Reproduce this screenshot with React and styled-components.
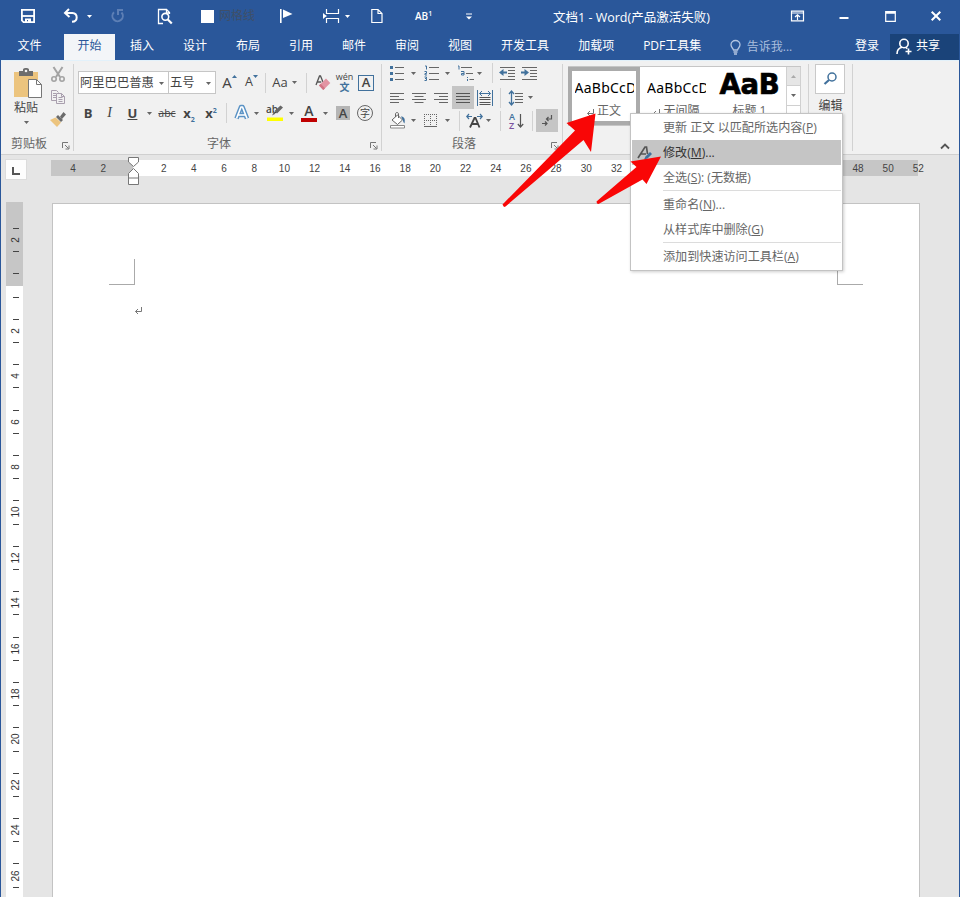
import React from 'react';
import styled, { createGlobalStyle, css } from 'styled-components';

const tabs = ['文件', '开始', '插入', '设计', '布局', '引用', '邮件', '审阅', '视图', '开发工具', '加载项', 'PDF工具集'];
// 34 - 46 sit behind the open menu
const rulerMarks = [4, 2, '', ...Array.from({ length: 26 }, (_, i) => (i + 1) * 2)].map((mark) =>
	mark > 32 && mark < 48 ? '' : mark
);
const sideMarks = [2, '', ...Array.from({ length: 13 }, (_, i) => (i + 1) * 2)];

const menuItems = [
	{ text: '更新 正文 以匹配所选内容', hotkey: 'P' },
	{ text: '修改', hotkey: 'M', tail: '...', active: true },
	{ text: '全选', hotkey: 'S', tail: ': (无数据)', divider: true },
	{ text: '重命名', hotkey: 'N', tail: '...' },
	{ text: '从样式库中删除', hotkey: 'G', divider: true },
	{ text: '添加到快速访问工具栏', hotkey: 'A' },
];

const Icon = ({ w, h, ml = 0, children, ...rest }) => (
	<Svg width={w} height={h} viewBox={`0 0 ${w} ${h}`} $ml={ml} fill='none' {...rest}>
		{children}
	</Svg>
);

const Caret = ({ ml, color = '#666' }) => (
	<Icon w={5} h={3} ml={ml}>
		<path d='M0 0h5L2.5 3z' fill={color} />
	</Icon>
);

const Launcher = () => (
	<Icon w={8} h={8}>
		<path d='M.5 6V.5H6M3 3l3.5 3.5M7 3.5V7H3.5' stroke='#777' />
	</Icon>
);

const TitleBar = () => (
	<Title>
		<Icon w={16} h={16} ml={20} stroke='#fff' strokeWidth='1.8'>
			<path d='M1.9 1.9h12.2v12.2H3.5L1.9 12.5z' />
			<path d='M2 8h12' />
			<path d='M5 10.5h6V14H8v-2H7v2H5z' fill='#fff' stroke='none' />
		</Icon>
		<Icon w={16} h={16} ml={27} stroke='#fff' strokeWidth='2'>
			<path d='M6 1L2 5l4.5 4M2.5 5h6.8c5.8.5 6 8.4-.3 8.8' />
		</Icon>
		<Caret ml={8} color='#fff' />
		<Icon w={15} h={16} ml={18} stroke='#5d7fb5' strokeWidth='2'>
			<path d='M4 4.2a5.2 5.2 0 1 0 7.5.3M8 7V2h5' />
		</Icon>
		<Icon w={16} h={17} ml={32} stroke='#fff' strokeWidth='1.3'>
			<path d='M6 15.5H1.5v-14h8l3 3V6M9.5 1.5V5h3' />
			<circle cx='8.3' cy='8.8' r='3.4' strokeWidth='1.6' />
			<path d='M10.8 11.5l4 4' strokeWidth='2.2' />
		</Icon>
		<CheckBox />
		<Faded>网格线</Faded>
		<Icon w={14} h={16} ml={23} fill='#fff'>
			<path d='M1 1h1.6v14H1zM4 1.5l9.5 4.6L4 10z' />
		</Icon>
		<Icon w={18} h={16} ml={29} stroke='#fff' strokeWidth='1.2'>
			<path d='M4.5 1v4.5h12V1M4.5 15v-4.5h12V15M3 8h1.5' />
			<path d='M1 5v6l3.5-3z' fill='#fff' stroke='none' />
		</Icon>
		<Caret ml={5} color='#fff' />
		<Icon w={12} h={16} ml={21} stroke='#fff' strokeWidth='1.2'>
			<path d='M.8 1.5H7l4 4v9H.8zM7 1.5v4h4' />
		</Icon>
		<Footnote>
			AB<sup>1</sup>
		</Footnote>
		<Icon w={6} h={7} ml={34}>
			<path d='M0 1h6' stroke='#fff' />
			<path d='M0 3.5h6L3 6.5z' fill='#fff' />
		</Icon>
		<DocName>文档1 - Word(产品激活失败)</DocName>
		<Icon w={15} h={12} ml={80} stroke='#fff' strokeWidth='1.2'>
			<path d='M1.5 1.2h12v9.6h-12zM1.5 3h12M7.5 10V5M5 7l2.5-2.3L10 7' />
		</Icon>
		<Icon w={10} h={8} ml={34}>
			<path d='M.5 5h9v2h-9z' fill='#fff' />
		</Icon>
		<Icon w={11} h={11} ml={36} stroke='#fff'>
			<path d='M.7.5h9.6v9.8H.7zM1 2h9' strokeWidth='1.2' />
			<path d='M1 1.5h9' strokeWidth='2' />
		</Icon>
		<Icon w={12} h={12} ml={34} stroke='#fff' strokeWidth='2'>
			<path d='M1.7 1.7l8.6 8.6M10.3 1.7l-8.6 8.6' />
		</Icon>
	</Title>
);

const TabBar = () => (
	<Tabs>
		{tabs.map((tab) => (
			<Tab key={tab} $active={tab === '开始'}>
				{tab}
			</Tab>
		))}
		<TellMe>
			<Icon w={11} h={15} stroke='#b5c6e2' strokeWidth='1.3'>
				<path d='M3.5 10C3 8 1 7.5 1 4.8a4.5 4.3 0 0 1 9 0C10 7.5 8 8 7.5 10zM3.5 12h4M4 14h3' />
			</Icon>
			告诉我...
		</TellMe>
		<SignIn>登录</SignIn>
		<Share>
			<Icon w={16} h={17} stroke='#fff' strokeWidth='1.6'>
				<circle cx='8' cy='5.5' r='4.2' />
				<path d='M1 16c0-4 2-6.2 5-6.8M9.8 9.5l1.5 1.2M12.5 10.5v6M9.5 13.5h6' />
			</Icon>
			共享
		</Share>
	</Tabs>
);

const Clipboard = () => (
	<Group $w={73}>
		<ClipBody>
			<PasteCol>
				<Icon w={30} h={32}>
					<path d='M1 5h24v25H1z' fill='#ecc47e' />
					<path d='M6 4h4V2.5C10 .5 16 .5 16 2.5V4h4v5H6z' fill='#6d6d6d' />
					<circle cx='13' cy='4' r='1.3' fill='#f1f1f1' />
					<path d='M15.5 12.5h8l5 5v13h-13z' fill='#fff' stroke='#777' />
					<path d='M23.5 12.5v5h5' stroke='#777' />
				</Icon>
				<span>粘贴</span>
				<Caret ml={0} />
			</PasteCol>
			<ToolCol>
				<Icon w={16} h={16} stroke='#a3a3a3' strokeWidth='1.6'>
					<path d='M3.5 0l6.5 10M12.5 0L6 10' strokeWidth='2' />
					<circle cx='4' cy='12' r='2.2' />
					<circle cx='12' cy='12' r='2.2' />
				</Icon>
				<Icon w={16} h={16} stroke='#a99fae'>
					<path d='M6 10.5H1.5v-10h5l2 2M3 3.5h3M3 5.5h3M3 7.5h3' />
					<path d='M6.5 3.5h5l3 3v7h-8zM11.5 3.5v3h3M8.5 7.5h4M8.5 9.5h4M8.5 11.5h4' fill='#f1f1f1' />
				</Icon>
				<Icon w={16} h={16}>
					<path d='M0 8l5.5-2.5L11 10.5l-4 4.5z' fill='#ecc47e' />
					<path d='M6 5l2-2 5 5-2 2zM10 4.5L13.5 0 16 2.5l-4 4.5z' fill='#6b6b6b' />
				</Icon>
			</ToolCol>
		</ClipBody>
		<GroupLabel $pad={10}>
			剪贴板
			<Launcher />
		</GroupLabel>
	</Group>
);

const FontGroup = () => (
	<Group $w={308}>
		<Rows $top={7} $gap={8}>
			<Row $h={23}>
				<Combo $w={91} $ml={4}>
					<span>阿里巴巴普惠</span>
					<Caret />
				</Combo>
				<Combo $w={48} $ml={-1}>
					<span>五号</span>
					<Caret />
				</Combo>
				<Letter $w={10} $ml={6} $size={15}>A</Letter>
				<Icon w={5} h={16}>
					<path d='M0 3l2.5-3L5 3z' fill='#41719c' />
				</Icon>
				<Letter $w={8} $ml={8} $size={12.5}>A</Letter>
				<Icon w={5} h={16}>
					<path d='M0 0h5L2.5 3z' fill='#41719c' />
				</Icon>
				<Line $ml={7} />
				<Letter $w={16} $ml={6} $size={13}>Aa</Letter>
				<Caret ml={4} />
				<Line $ml={9} />
				<Icon w={16} h={18} ml={8}>
					<path d='M1 11L4.5 2h1L8 8M2.3 8h4' stroke='#555' strokeWidth='1.3' />
					<path d='M4 11.5l7-7 4.3 4.5-7 7z' fill='#e294a3' />
					<path d='M4 11.5l1.7-1.7 4.3 4.5-1.7 1.7z' fill='#d27384' />
				</Icon>
				<Pinyin>
					<span>wén</span>
					<b>文</b>
				</Pinyin>
				<BoxedA>A</BoxedA>
			</Row>
			<Row $h={22}>
				<Letter $w={10} $ml={9} $size={13} $bold>B</Letter>
				<Letter $w={9} $ml={12} $size={14} $italic>I</Letter>
				<Letter $w={11} $ml={13} $size={13} $bold $line='underline'>U</Letter>
				<Caret ml={9} />
				<Letter $w={18} $ml={6} $size={10.5} $line='line-through'>abc</Letter>
				<Letter $w={14} $ml={6} $size={13} $bold>
					x<sub>2</sub>
				</Letter>
				<Letter $w={14} $ml={8} $size={13} $bold>
					x<sup>2</sup>
				</Letter>
				<Line $ml={8} />
				<Icon w={16} h={18} ml={7} strokeLinejoin='round'>
					<path d='M2.5 14.5L7 3h1.5L13 14.5M4.5 11h6.5' stroke='#5b93c5' strokeWidth='4.6' />
					<path d='M2.5 14.5L7 3h1.5L13 14.5M4.5 11h6.5' stroke='#fff' strokeWidth='1.7' />
				</Icon>
				<Caret ml={4} />
				<Marker>
					<span>ab</span>
					<Icon w={19} h={18}>
						<path d='M6 11.5l2-4 1.5 2.2zM8.5 7l6-5.5L17 3.5l-6 6z' fill='#666' />
						<path d='M1 13.5h16v3.5H1z' fill='#ff0' />
					</Icon>
				</Marker>
				<Caret ml={4} />
				<ColorA>A</ColorA>
				<Caret ml={5} />
				<ShadedA>A</ShadedA>
				<CircledChar>字</CircledChar>
			</Row>
		</Rows>
		<GroupLabel $pad={133}>
			字体
			<Launcher />
		</GroupLabel>
	</Group>
);

const ParagraphGroup = () => (
	<Group $w={181}>
		<Rows $top={0} $gap={0}>
			<Row $h={18} $mb={4}>
				<Icon w={14} h={16} ml={8}>
					<path d='M0 1h3v3H0zM0 7h3v3H0zM0 13h3v3H0z' fill='#41719c' />
					<path d='M5 2.5h9M5 8.5h9M5 14.5h9' stroke='#666' />
				</Icon>
				<Caret ml={7} />
				<Icon w={15} h={16} ml={8}>
					<path d='M1 1h1.5v3.5M.5 6.5h2v2H1v1.5h2M.5 12h2v1.5H1M2.5 13.5v2h-2' stroke='#41719c' />
					<path d='M5 2.5h10M5 8.5h10M5 14.5h10' stroke='#666' />
				</Icon>
				<Caret ml={6} />
				<Icon w={17} h={16} ml={7}>
					<path d='M1 1h1v3.5M4 6.5h3V10H4.5V8.5H7M10.5 14v2M10.5 12v1' stroke='#41719c' />
					<path d='M4 2.5h11M9 8.5h7M12.5 14.5H17' stroke='#666' />
				</Icon>
				<Caret ml={3} />
				<Line $ml={10} />
				<Icon w={17} h={14} ml={6}>
					<path d='M1 1.5h15M9 4.5h7M9 7.5h7M9 10.5h7M1 13.5h15' stroke='#666' />
					<path d='M0 6.5L4.5 3v2.5H8v2H4.5V10z' fill='#41719c' />
				</Icon>
				<Icon w={17} h={14} ml={5}>
					<path d='M1 1.5h15M9 4.5h7M9 7.5h7M9 10.5h7M1 13.5h15' stroke='#666' />
					<path d='M8 6.5L3.5 3v2.5H0v2h3.5V10z' fill='#41719c' />
				</Icon>
			</Row>
			<Row $h={23}>
				<Icon w={14} h={12} ml={8} stroke='#666'>
					<path d='M0 1.5h14M0 4.5h9M0 7.5h14M0 10.5h9' />
				</Icon>
				<Icon w={14} h={12} ml={8} stroke='#666'>
					<path d='M0 1.5h14M2.5 4.5h9M0 7.5h14M2.5 10.5h9' />
				</Icon>
				<Icon w={14} h={12} ml={8} stroke='#666'>
					<path d='M0 1.5h14M5 4.5h9M0 7.5h14M5 10.5h9' />
				</Icon>
				<Pressed $ml={4}>
					<Icon w={14} h={12} stroke='#555'>
						<path d='M0 1.5h14M0 4.5h14M0 7.5h14M0 10.5h14' />
					</Icon>
				</Pressed>
				<Icon w={17} h={16} ml={3}>
					<path d='M.5 0v16M15.5 0v16M2.5 3.5h11M5 1L2.5 3.5 5 6M11 1l2.5 2.5L11 6' stroke='#41719c' />
					<path d='M2.5 7.5h11M2.5 9.5h11M2.5 12.5h11M2.5 14.5h11' stroke='#555' />
				</Icon>
				<Line $ml={6} />
				<Icon w={16} h={16} ml={7}>
					<path d='M3.5 1v14M1 4l2.5-3L6 4M1 12l2.5 3L6 12' stroke='#41719c' strokeWidth='1.3' />
					<path d='M7 3.5h8M7 6.5h8M7 9.5h8M7 12.5h8' stroke='#666' />
				</Icon>
				<Caret ml={4} />
			</Row>
			<Row $h={23}>
				<Icon w={17} h={17} ml={7}>
					<path d='M3 8l5.5-5 5 5L8.5 12.5z' fill='#fff' stroke='#666' />
					<path d='M6.5 5V2c0-2 3-2 3 0V6' stroke='#666' />
					<path d='M12 4.5c3 0 4.5 2 3.5 7-1.5-1.5-1.5-3-2-4z' fill='#41719c' />
					<path d='M1.5 13.5h14v2.5h-14z' fill='#fff' stroke='#888' />
				</Icon>
				<Caret ml={5} />
				<Icon w={14} h={14} ml={8} stroke='#666' strokeDasharray='1 1'>
					<path d='M.5 0v12M6.5 0v12M12.5 0v12M0 .5h13M0 6.5h13' />
					<path d='M0 12.5h13' strokeDasharray='none' />
				</Icon>
				<Caret ml={7} />
				<Line $ml={9} />
				<Icon w={18} h={16} ml={6}>
					<path d='M4 14.5L8.5 5h1l4 9.5M6 11h6' stroke='#444' strokeWidth='1.8' />
					<path d='M1 3.5h5M3 1L.8 3.5 3 6M11 3.5h5M14 1l2.2 2.5L14 6' stroke='#41719c' strokeWidth='1.2' />
				</Icon>
				<Caret ml={2} />
				<Line $ml={9} />
				<SortIcon>
					<SortLetters>
						<span>A</span>
						<span>Z</span>
					</SortLetters>
					<Icon w={7} h={16}>
						<path d='M3.5 1v13M.8 11l2.7 3 2.7-3' stroke='#555' strokeWidth='1.2' />
					</Icon>
				</SortIcon>
				<Line $ml={8} />
				<Pressed $ml={3}>
					<Icon w={12} h={13} stroke='#555' strokeWidth='1.2'>
						<path d='M10.5 1v4H5.5M7.5 3L5.5 5l2 2M1 9.5h5M4 7.5l2 2-2 2' />
					</Icon>
				</Pressed>
			</Row>
		</Rows>
		<GroupLabel $pad={70}>
			段落
			<Launcher />
		</GroupLabel>
	</Group>
);

const ReturnMark = () => (
	<Icon w={7} h={8} stroke='#777'>
		<path d='M6.5 0v4.5h-6M3 2L.5 4.5 3 7' />
	</Icon>
);

const StylesGroup = () => (
	<Group $w={246}>
		<Gallery>
			<StyleCard $w={72} $selected>
				<Sample>AaBbCcD</Sample>
				<StyleName>
					<ReturnMark />
					正文
				</StyleName>
			</StyleCard>
			<StyleCard $w={73}>
				<Sample>AaBbCcD</Sample>
				<StyleName>
					<ReturnMark />
					无间隔
				</StyleName>
			</StyleCard>
			<StyleCard $w={73}>
				<Sample $heading>AaB</Sample>
				<StyleName>标题 1</StyleName>
			</StyleCard>
			<Scroller>
				<ScrollBtn $dim>
					<Icon w={5} h={3}>
						<path d='M0 3h5L2.5 0z' fill='#aaa' />
					</Icon>
				</ScrollBtn>
				<ScrollBtn>
					<Caret />
				</ScrollBtn>
				<ScrollBtn />
			</Scroller>
		</Gallery>
	</Group>
);

const EditGroup = () => (
	<Group $w={44}>
		<EditCol>
			<EditBtn>
				<Icon w={16} h={16} stroke='#41719c'>
					<circle cx='10' cy='6' r='4' strokeWidth='1.5' />
					<path d='M7 9l-4.5 4' strokeWidth='2.2' />
				</Icon>
			</EditBtn>
			编辑
		</EditCol>
	</Group>
);

const ContextMenu = () => (
	<Menu>
		{menuItems.map(({ text, hotkey, tail, active, divider }) => (
			<React.Fragment key={hotkey}>
				<MenuItem $active={active}>
					<MenuIcon>
						{active && (
							<Icon w={16} h={16}>
								<path d='M1 12L8 1h1.5L10.5 8M4 8h5' stroke='#555' strokeWidth='1.7' />
								<path d='M7 13.5l1.5-3L13 6l2 2-4.5 4.5z' fill='#41719c' />
							</Icon>
						)}
					</MenuIcon>
					<span>
						{text}(<u>{hotkey}</u>){tail}
					</span>
				</MenuItem>
				{divider && <Divider />}
			</React.Fragment>
		))}
	</Menu>
);

const App = () => (
	<>
		<GlobalStyle />
		<Window>
			<TitleBar />
			<TabBar />
			<Frame>
				<Ribbon>
					<Clipboard />
					<FontGroup />
					<ParagraphGroup />
					<StylesGroup />
					<EditGroup />
					<Collapse>
						<Icon w={10} h={7} stroke='#555' strokeWidth='1.8'>
							<path d='M1 5.5l4-4 4 4' />
						</Icon>
					</Collapse>
				</Ribbon>
				<RulerRow>
					<TabStop>
						<Icon w={8} h={8} stroke='#555' strokeWidth='2'>
							<path d='M1 0v7h7' />
						</Icon>
					</TabStop>
					<Ruler>
						{rulerMarks.map((mark, i) => (
							<RulerMark key={i}>{mark}</RulerMark>
						))}
						<Indent>
							<Icon w={12} h={29} stroke='#777'>
								<path d='M.5.5h10V5L5.5 9.5.5 5z' fill='#fff' />
								<path d='M5.5 11.5l5 5v11H.5v-11zM.5 21h10' fill='#fff' />
							</Icon>
						</Indent>
					</Ruler>
				</RulerRow>
				<Work>
					<SideRuler>
						{sideMarks.map((mark, i) => (
							<SideMark key={i}>
								<span>{mark}</span>
							</SideMark>
						))}
					</SideRuler>
					<Page>
						<PageTop>
							<Corner $side='right' />
							<Corner $side='left' />
						</PageTop>
						<Paragraph>
							<ReturnMark />
						</Paragraph>
					</Page>
				</Work>
			</Frame>
			<ContextMenu />
			<Arrows width='170' height='110' viewBox='495 105 170 110'>
				<path d='M595.5 113.5L566.5 123l8.5 7.5L502.5 204.5l1.5 2.5 1.5-.5L583.5 140l7.5 12z' />
				<path d='M661 156.5l-30.5 5 6 5.5-40 34.5.5 2 1.5.5 44-24.5 4 4.5z' />
			</Arrows>
		</Window>
	</>
);

export default App;

const GlobalStyle = createGlobalStyle`
	* {
		box-sizing: border-box;
	}

	body {
		margin: 0;
		font-family: 'Open Sans', 'Noto Sans CJK SC', sans-serif;
		font-size: 12px;
		line-height: 1;
		color: #444;
		overflow: hidden;
	}
`;

const Svg = styled.svg`
	display: block;
	flex: none;
	overflow: visible;
	margin-left: ${({ $ml }) => $ml}px;
`;

const Window = styled.div`
	position: relative;
	width: 960px;
	height: 897px;
	display: flex;
	flex-direction: column;
	overflow: hidden;
	white-space: nowrap;
`;

const Title = styled.div`
	height: 34px;
	padding-bottom: 2px;
	background-color: #2a579a;
	color: #fff;
	display: flex;
	align-items: center;
`;

const CheckBox = styled.div`
	width: 13px;
	height: 13px;
	margin-left: 28px;
	background-color: #fff;
`;

const Faded = styled.span`
	width: 38px;
	margin-left: 4px;
	padding-left: 1px;
	color: #3f4f68;
`;

const Footnote = styled.span`
	width: 17px;
	margin-left: 32px;
	font-size: 10px;
	font-weight: 600;

	sup {
		font-size: 7px;
		line-height: 0;
	}
`;

const DocName = styled.span`
	width: 157px;
	margin-left: 81px;
	padding-top: 4px;
	font-size: 12.5px;
`;

const Tabs = styled.div`
	height: 26px;
	padding-left: 3px;
	background-color: #2a579a;
	color: #fff;
	display: flex;
	align-items: stretch;
`;

const Tab = styled.div`
	padding: 0 14.5px 2px;
	display: flex;
	align-items: center;

	&:first-child {
		width: 53px;
	}

	${({ $active }) =>
		$active &&
		css`
			width: 51px;
			margin: 0 0.5px 0 8px;
			padding: 0 0 2px;
			justify-content: center;
			color: #2a579a;
			background-color: #f3f5f8;
		`}
`;

const TellMe = styled.div`
	width: 114px;
	margin-left: 14px;
	color: #a9bddd;
	display: flex;
	align-items: center;
	gap: 6px;
`;

const SignIn = styled.div`
	margin-left: auto;
	padding-bottom: 2px;
	display: flex;
	align-items: center;
`;

const Share = styled.div`
	width: 69px;
	margin: 0 1px 0 11px;
	padding: 0 0 3px 6px;
	background-color: #1a4379;
	display: flex;
	align-items: center;
	gap: 4px;

	svg {
		margin-top: 2px;
	}
`;

const Frame = styled.div`
	flex: 1;
	min-height: 0;
	border: solid #2a579a;
	border-width: 0 1px;
	background-color: #e5e5e5;
	display: flex;
	flex-direction: column;
`;

const Ribbon = styled.div`
	height: 95px;
	padding-top: 3px;
	border-top: 1px solid #e2f1fa;
	border-bottom: 1px solid #d0d0d0;
	background-color: #f1f1f1;
	display: flex;
`;

const Group = styled.div`
	width: ${({ $w }) => $w}px;
	height: 87px;
	border-right: 1px solid #d2d2d2;
	display: flex;
	flex-direction: column;
	flex: none;
`;

const GroupLabel = styled.div`
	height: 17px;
	margin-top: auto;
	padding: 2px 3px 0 ${({ $pad }) => $pad}px;
	color: #666;
	display: flex;
	align-items: center;
	justify-content: space-between;

	svg {
		margin-top: 5px;
	}
`;

const ClipBody = styled.div`
	display: flex;
	padding: 3px 0 0 12px;
	gap: 7px;
`;

const PasteCol = styled.div`
	width: 30px;
	display: flex;
	flex-direction: column;
	align-items: center;

	> span {
		margin: 3px 4px 7px 0;
	}

	> svg:last-child {
		margin-right: 3px;
	}
`;

const ToolCol = styled.div`
	display: flex;
	flex-direction: column;
	gap: 6.5px;
`;

const Rows = styled.div`
	padding-top: ${({ $top }) => $top}px;
	display: flex;
	flex-direction: column;
	gap: ${({ $gap }) => $gap}px;
`;

const Row = styled.div`
	height: ${({ $h }) => $h}px;
	margin-bottom: ${({ $mb = 0 }) => $mb}px;
	display: flex;
	align-items: center;
`;

const Line = styled.div`
	width: 1px;
	height: 20px;
	margin-left: ${({ $ml }) => $ml}px;
	background-color: #d2d2d2;
`;

const Combo = styled.div`
	width: ${({ $w }) => $w}px;
	height: 23px;
	margin-left: ${({ $ml }) => $ml}px;
	padding: 1px 4px 0 1px;
	border: 1px solid #c6c6c6;
	background-color: #fff;
	font-size: 12.3px;
	display: flex;
	align-items: center;
	justify-content: space-between;
	flex: none;
`;

const Letter = styled.span`
	width: ${({ $w }) => $w}px;
	margin-left: ${({ $ml }) => $ml}px;
	font-size: ${({ $size }) => $size}px;
	font-weight: ${({ $bold }) => ($bold ? 700 : 400)};
	font-style: ${({ $italic }) => ($italic ? 'italic' : 'normal')};
	font-family: ${({ $italic }) => ($italic ? "'Liberation Serif', serif" : 'inherit')};
	text-decoration: ${({ $line }) => $line || 'none'};
	text-align: center;
	flex: none;

	sub,
	sup {
		font-size: 7px;
		line-height: 0;
		color: #41719c;
	}
`;

const Pinyin = styled.span`
	width: 17px;
	margin-left: 5px;
	padding-bottom: 2px;
	font-size: 9px;
	display: flex;
	flex-direction: column;
	align-items: center;
	gap: 1px;

	b {
		font-size: 10px;
		color: #41719c;
	}
`;

const BoxedA = styled.span`
	width: 16px;
	height: 16px;
	margin-left: 5px;
	border: 1.5px solid #41719c;
	font-size: 13px;
	font-weight: 600;
	display: flex;
	align-items: center;
	justify-content: center;
`;

const Marker = styled.span`
	width: 19px;
	margin-left: 7px;
	display: grid;

	> * {
		grid-area: 1 / 1;
	}

	> span {
		font-size: 10px;
		font-weight: 600;
	}
`;

const ColorA = styled.span`
	width: 16px;
	height: 17px;
	margin: 0 1px 0 7px;
	border-bottom: 4px solid #c00000;
	font-size: 14px;
	font-weight: 600;
	line-height: 12px;
	text-align: center;
`;

const ShadedA = styled.span`
	width: 14px;
	height: 14px;
	margin-left: 8px;
	background-color: #b5b5b5;
	font-size: 13px;
	font-weight: 600;
	line-height: 14px;
	text-align: center;
`;

const CircledChar = styled.span`
	width: 16px;
	height: 16px;
	margin-left: 7px;
	border: 1px solid #666;
	border-radius: 50%;
	font-size: 10px;
	display: flex;
	align-items: center;
	justify-content: center;
`;

const Pressed = styled.div`
	width: 22px;
	height: 23px;
	margin-left: ${({ $ml }) => $ml}px;
	background-color: #c5c5c5;
	display: flex;
	align-items: center;
	justify-content: center;
`;

const SortIcon = styled.span`
	width: 15px;
	margin-left: 8px;
	display: flex;
	align-items: center;
	gap: 1px;
`;

const SortLetters = styled.span`
	width: 7px;
	font-size: 9px;
	font-weight: 600;
	line-height: 9px;
	color: #41719c;
	display: flex;
	flex-direction: column;

	span:last-child {
		color: #7a52a0;
	}
`;

const Gallery = styled.div`
	width: 233px;
	height: 60px;
	margin: 2px 0 0 5px;
	border: solid #c6c6c6;
	border-width: 1px 0;
	background-color: #fff;
	display: flex;
`;

const StyleCard = styled.div`
	width: ${({ $w }) => $w}px;
	padding: ${({ $selected }) => ($selected ? '2px 0' : '6px 0 0')};
	border: ${({ $selected }) => ($selected ? '4px solid #ababab' : 'none')};
	display: flex;
	flex-direction: column;
	align-items: center;
	flex: none;
`;

const Sample = styled.div`
	width: 59px;
	height: 30px;
	overflow: hidden;
	font-family: 'Noto Sans', sans-serif;
	font-size: 14px;
	line-height: 29px;
	letter-spacing: 0.25px;
	color: #000;

	${({ $heading }) =>
		$heading &&
		css`
			width: auto;
			overflow: visible;
			font-family: 'DejaVu Sans', sans-serif;
			font-size: 27.5px;
			font-weight: 700;
			line-height: 23px;
			letter-spacing: -0.3px;
			-webkit-text-stroke: 0.7px #000;
		`}
`;

const StyleName = styled.div`
	height: 14px;
	margin-top: 1px;
	color: #666;
	display: flex;
	align-items: center;
	gap: 3px;

	svg {
		margin-top: 4px;
	}
`;

const Scroller = styled.div`
	width: 15px;
	border: solid #d0d0d0;
	border-width: 0 1px;
	display: flex;
	flex-direction: column;
`;

const ScrollBtn = styled.div`
	flex: 1;
	border-bottom: 1px solid #d0d0d0;
	background-color: ${({ $dim }) => ($dim ? '#e6e6e6' : '#fff')};
	display: flex;
	align-items: center;
	justify-content: center;
`;

const EditCol = styled.div`
	width: 37px;
	padding-left: 6px;
	display: flex;
	flex-direction: column;
	align-items: center;
	gap: 6px;
`;

const EditBtn = styled.div`
	width: 30px;
	height: 30px;
	margin-left: -1px;
	border: 1px solid #c9c9c9;
	background-color: #fff;
	display: flex;
	align-items: center;
	justify-content: center;
`;

const Collapse = styled.div`
	margin: auto 9px 4px auto;
`;

const RulerRow = styled.div`
	height: 47px;
	padding: 4px 0 0 4px;
	display: flex;
	align-items: flex-start;
	flex: none;
`;

const TabStop = styled.div`
	width: 22px;
	height: 21px;
	border: 1px solid #dcdcdc;
	background-color: #fdfdfd;
	padding: 3px 0 0 0;
	display: flex;
	align-items: center;
	justify-content: center;
`;

const Ruler = styled.div`
	position: relative;
	width: 867px;
	height: 16px;
	margin: 1px 0 0 24px;
	padding-left: 7px;
	background: linear-gradient(90deg, #c6c6c6 82px, #fff 82px, #fff 786px, #c6c6c6 786px);
	display: flex;
	align-items: center;
`;

const RulerMark = styled.span`
	width: 30.2px;
	padding-top: 2px;
	font-family: 'Liberation Sans', sans-serif;
	font-size: 10px;
	text-align: center;
	flex: none;
`;

const Indent = styled.div`
	position: absolute;
	left: 77px;
	top: -3px;
`;

const Work = styled.div`
	flex: 1;
	min-height: 0;
	display: flex;
`;

const SideRuler = styled.div`
	width: 17px;
	margin-left: 5px;
	padding-top: 15.5px;
	background: linear-gradient(#c6c6c6 84px, #fff 84px);
	overflow: hidden;
`;

const SideMark = styled.div`
	height: 45.4px;
	padding: 10.5px 0 10.6px 2px;
	font-family: 'Liberation Sans', sans-serif;
	font-size: 10px;
	color: #333;
	display: flex;
	flex-direction: column;
	align-items: center;
	justify-content: space-between;

	&::before,
	&::after {
		content: '';
		width: 6px;
		height: 1px;
		background-color: #444;
	}

	span {
		height: 12px;
		line-height: 12px;
		display: flex;
		align-items: center;
		justify-content: center;
		transform: rotate(-90deg);
	}
`;

const Page = styled.div`
	width: 868px;
	margin: 1px 0 0 29px;
	border: 1px solid #c3c3c3;
	border-bottom: none;
	background-color: #fff;
`;

const PageTop = styled.div`
	padding: 55px 56px 0;
	display: flex;
	justify-content: space-between;
`;

const Corner = styled.div`
	width: 26px;
	height: 26px;
	border-bottom: 1px solid #aaa;
	border-${({ $side }) => $side}: 1px solid #aaa;
`;

const Paragraph = styled.div`
	padding: 22px 0 0 82px;
`;

const Menu = styled.div`
	position: absolute;
	left: 630px;
	top: 113px;
	width: 213px;
	height: 158px;
	padding: 1px;
	border: 1px solid #c3c3c3;
	background-color: #fff;
	box-shadow: 1px 1px 3px rgba(0, 0, 0, 0.2);
`;

const MenuItem = styled.div`
	height: 25px;
	padding-top: 2px;
	color: ${({ $active }) => ($active ? '#333' : '#666')};
	background-color: ${({ $active }) => ($active ? '#c5c5c5' : 'transparent')};
	font-size: 12.1px;
	display: flex;
	align-items: center;

	u {
		text-underline-offset: 1px;
	}
`;

const MenuIcon = styled.div`
	width: 31px;
	padding-left: 5px;
`;

const Divider = styled.div`
	height: 1px;
	margin: 0 0 1px 31px;
	background-color: #dcdcdc;
`;

const Arrows = styled.svg`
	position: absolute;
	left: 495px;
	top: 105px;
	fill: #f90606;
`;
